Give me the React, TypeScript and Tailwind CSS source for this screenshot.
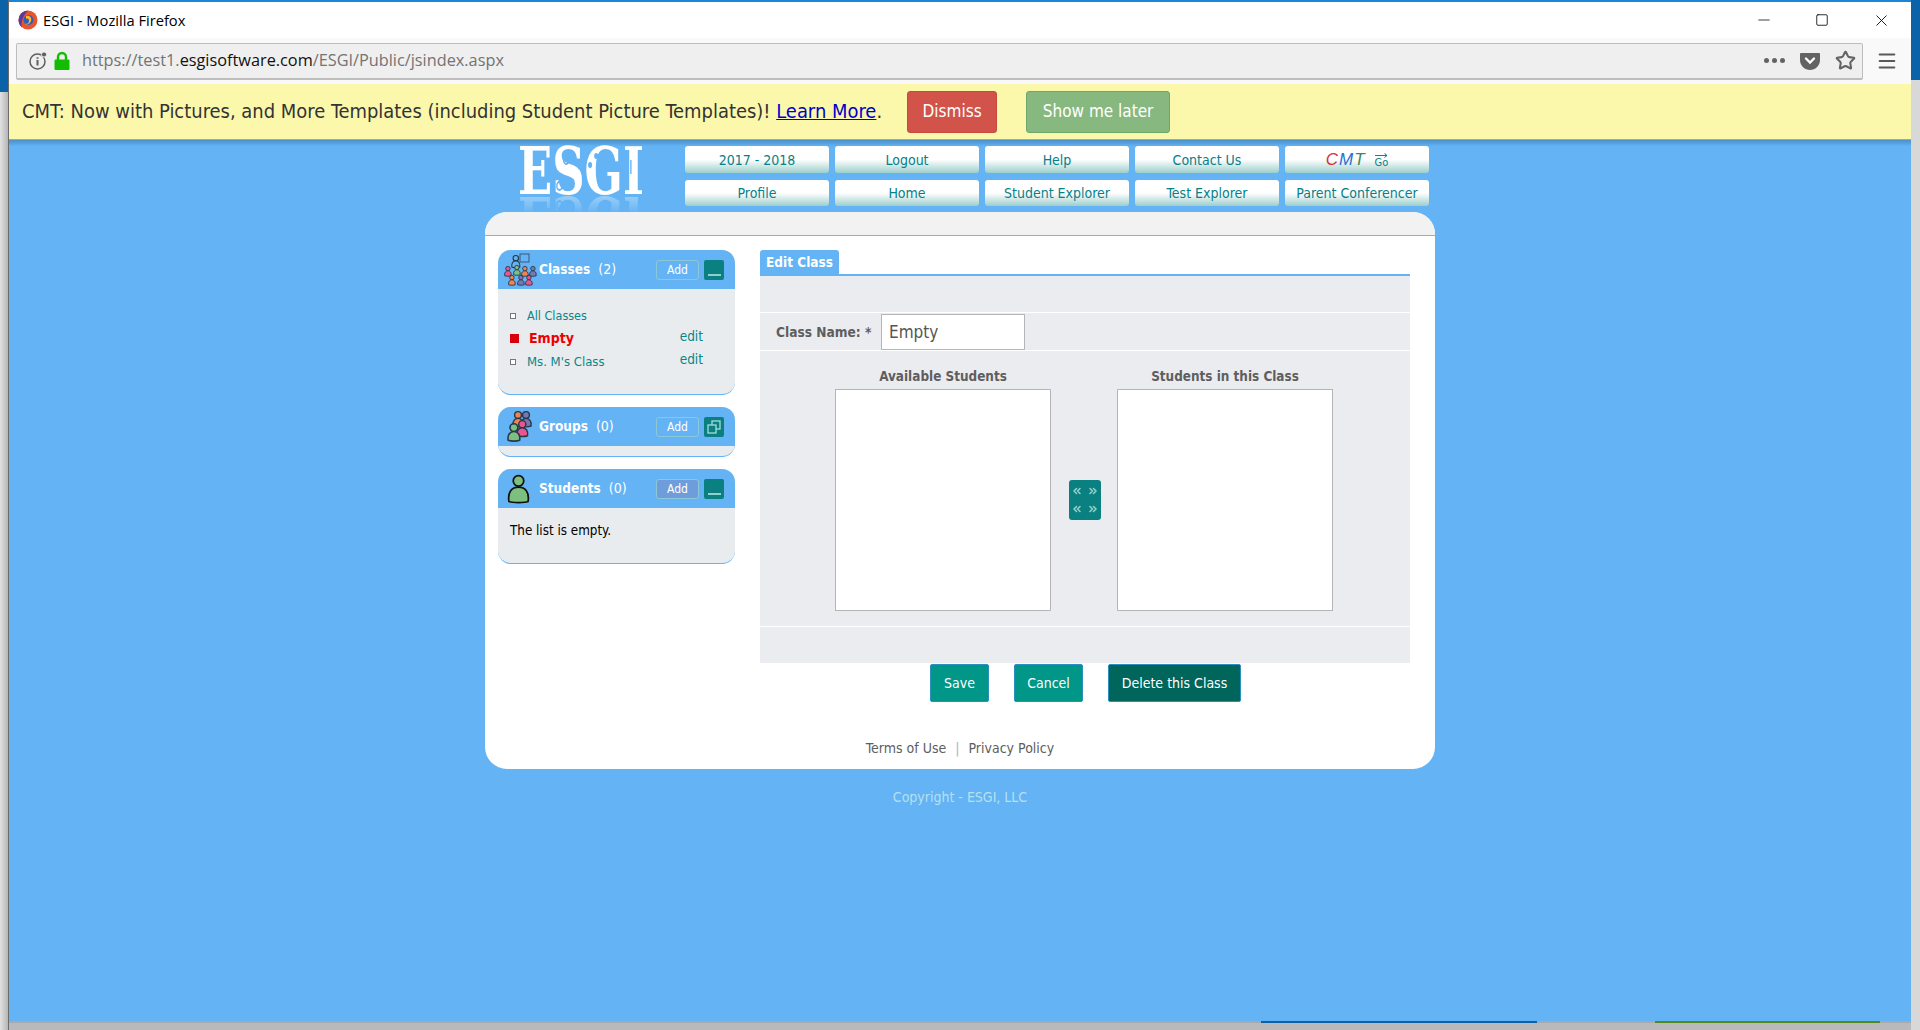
import { ChevronsLeft, ChevronsRight, Minus, Square, Star, X, Menu } from 'lucide-react'

const tahoma = "font-['DejaVu_Sans_Condensed','DejaVu_Sans',sans-serif]"

const topNav = ['2017 - 2018', 'Logout', 'Help', 'Contact Us', 'CMT']
const bottomNav = ['Profile', 'Home', 'Student Explorer', 'Test Explorer', 'Parent Conferencer']

function NavButton({ label, tall }: { label: string; tall?: boolean }) {
  return (
    <button
      className={`flex items-center justify-center rounded-[3px] bg-gradient-to-b from-white from-50% to-[#9ccfcc] pt-[1px] text-[14px] text-[#06808a] ${tall ? 'h-[27px]' : 'h-[26px]'}`}
    >
      {label === 'CMT' ? (
        <span className="flex items-center gap-[9px]">
          <span className="font-['Liberation_Sans',sans-serif] text-[17px] italic tracking-[1px]">
            <span className="text-[#d8303a]">C</span>
            <span className="text-[#2b6fd0]">M</span>
            <span className="text-[#3f8a55]">T</span>
          </span>
          <span className="flex flex-col items-center text-[11px] leading-[10px]">
            <svg width="13" height="5" viewBox="0 0 13 5" fill="none" stroke="#06808a">
              <path d="M0 2.500h12M9.500 .5l2.500 2-2.500 2" />
            </svg>
            Go
          </span>
        </span>
      ) : (
        label
      )}
    </button>
  )
}

function Person({ x, y, s, fill }: { x: number; y: number; s: number; fill: string }) {
  return (
    <g transform={`translate(${x} ${y}) scale(${s})`} fill={fill} stroke="#27384a" strokeWidth={1.4}>
      <circle cx="6" cy="4" r="3.4" />
      <path d="M1 15c-.8-5 1.800-7.600 5-7.600s5.800 2.600 5 7.600c-2.500 1-7.500 1-10 0z" />
    </g>
  )
}

function ClassesIcon() {
  return (
    <svg width="34" height="34" viewBox="0 0 34 34" className="-ml-[1px]">
      <rect x="16" y="1" width="9" height="8" fill="none" stroke="#3a5a7a" />
      <Person x={7} y={2} s={0.8} fill="#63b3f5" />
      <Person x={0} y={13} s={0.65} fill="#e9558f" />
      <Person x={9} y={12} s={0.65} fill="#7dbf7e" />
      <Person x={17} y={13} s={0.65} fill="#f0834f" />
      <Person x={25} y={13} s={0.65} fill="#7677b5" />
      <Person x={4} y={22} s={0.65} fill="#f0834f" />
      <Person x={13} y={22} s={0.65} fill="#7677b5" />
      <Person x={21} y={22} s={0.65} fill="#e9558f" />
    </svg>
  )
}

function GroupsIcon() {
  return (
    <svg width="28" height="34" viewBox="0 0 28 34" className="-ml-[3px]">
      <Person x={6} y={1} s={1} fill="#f0834f" />
      <Person x={14} y={1} s={1} fill="#7677b5" />
      <Person x={10} y={10} s={1.05} fill="#e9558f" />
      <Person x={1} y={13} s={1.15} fill="#7dbf7e" />
    </svg>
  )
}

function StudentIcon() {
  return (
    <svg width="23" height="32" viewBox="0 0 24 32" className="-ml-[5px]">
      <circle cx="12" cy="7.500" r="5.500" fill="#7dbf7e" stroke="#111" strokeWidth="1.800" />
      <path d="M2 29c-1.500-10 3-15 10-15s11.500 5 10 15c-4 1.500-16 1.500-20 0z" fill="#7dbf7e" stroke="#111" strokeWidth="1.800" />
    </svg>
  )
}

function PanelHeader({
  icon,
  title,
  count,
  toggle,
  addActive,
}: {
  icon: React.ReactNode
  title: string
  count: number
  toggle: 'minus' | 'restore'
  addActive?: boolean
}) {
  return (
    <div className="flex h-[39px] items-center rounded-t-[13px] bg-[#63b3f5] pl-[5px] pr-[11px]">
      <div className="flex w-[36px] justify-center">{icon}</div>
      <span className="text-[13.500px] font-bold text-white">{title}</span>
      <span className="ml-2 text-[14px] text-white">({count})</span>
      <button
        className={`ml-auto flex h-[20px] w-[43px] items-center justify-center rounded-[3px] border border-[#8cc8d8] text-[12px] text-white ${addActive ? 'bg-[#6f9ddb]' : ''}`}
      >
        Add
      </button>
      <div className="ml-[5px] flex size-[20px] items-center justify-center rounded-[2px] bg-[#0b8080]">
        {toggle === 'minus' ? (
          <span className="mt-[11px] h-[2px] w-[13px] bg-[#8fcfd0]" />
        ) : (
          <svg width="16" height="16" viewBox="0 0 16 16" fill="none" stroke="#a5dcdc" strokeWidth="1.300">
            <rect x="6" y="2" width="8" height="8" />
            <rect x="2" y="6" width="8" height="8" fill="#0b8080" />
          </svg>
        )}
      </div>
    </div>
  )
}

function ClassRow({ name, active, edit, small }: { name: string; active?: boolean; edit?: boolean; small?: boolean }) {
  return (
    <div className="flex h-[23px] items-center pl-[12px] pr-[32px] text-[13px]">
      <span className="flex w-[17px] items-center">
        {active ? (
          <span className="size-[9px] bg-[#d8000c]" />
        ) : (
          <span className="size-[6px] border border-[#777] bg-white" />
        )}
      </span>
      <span className={active ? 'pl-[2px] text-[14px] font-bold text-[#f00000]' : `text-[#0a8588] ${small ? 'pt-[2px] text-[12.500px]' : ''}`}>
        {name}
      </span>
      {edit && <span className="ml-auto -translate-y-[2px] text-[13.500px] text-[#0a8588]">edit</span>}
    </div>
  )
}

function StudentList({ title }: { title: string }) {
  return (
    <div className="flex w-[216px] flex-col">
      <div className="h-[26px] pt-[1px] text-center text-[13.400px] font-bold leading-[26px] text-[#5e5e5e]">{title}</div>
      <div className="h-[222px] border border-[#b5b5b8] bg-white" />
    </div>
  )
}

function EsgiLogo() {
  return (
    <div className="ml-[33px] mt-[1px] h-[48px] w-[120px] [-webkit-box-reflect:below_1px_linear-gradient(transparent_62%,rgba(255,255,255,0.35))]">
      <div className="relative h-[48px] w-[177px] origin-top-left scale-x-[0.68] font-['DejaVu_Serif',serif] text-[66px] font-bold leading-[48px] text-white">
        ESGI
        <span className="absolute left-[103px] top-[15px] size-[6px] rounded-full bg-[#63b3f5]" />
        <span className="absolute left-[112px] top-[6px] size-[6px] rounded-full bg-[#63b3f5]" />
        <span className="absolute left-[123px] top-[4px] size-[6px] rounded-full bg-[#63b3f5]" />
        <span className="absolute left-[66px] top-[8px] size-[10px] rounded-full border-2 border-[#63b3f5]" />
        <span className="absolute left-[56px] top-[34px] size-[10px] rounded-full border-2 border-[#63b3f5]" />
        <span className="absolute left-[165px] top-[13px] h-[14px] w-[2px] bg-[#63b3f5]" />
      </div>
    </div>
  )
}

export default function App() {
  return (
    <div className={`flex h-[1030px] w-[1920px] overflow-hidden bg-gradient-to-b from-[#dcdcdc] to-[#b9b9bb] ${tahoma}`}>
      {/* bordes de la ventana de atras */}
      <div className="flex h-full w-[9px] shrink-0 flex-col border-r border-[#6b6b6b]">
        <div className="h-[92px] bg-[#0a63a8]" />
        <div className="flex-1 bg-gradient-to-r from-[#e2e2e2] to-[#b5b5b5]" />
      </div>

      <div className="flex h-[1023px] min-w-0 flex-1 flex-col">
        {/* Titulo */}
        <div className="flex h-[38px] shrink-0 items-center border-t-2 border-[#1a86d8] bg-white pl-[9px] font-['Open_Sans',sans-serif] text-[14.700px] text-black">
          <svg width="20" height="20" viewBox="0 0 20 20">
            <circle cx="10" cy="10" r="9.500" fill="#e8552d" />
            <path d="M10 .5a9.500 9.500 0 0 0-9.500 9.500c0 3 1.500 6 3.500 7.500C2.500 12 5 6 10 .5z" fill="#5b3aa0" />
            <circle cx="10.500" cy="10" r="5" fill="#2d5fb8" />
            <path d="M8 6c4-1 6 2 5 5s-4 4-6 3c3 0 4-1 4-3S10 8 8 9z" fill="#ffb52e" />
          </svg>
          <span className="ml-[5px]">ESGI - Mozilla Firefox</span>
          <div className="ml-auto flex items-center">
            <Minus size={18} strokeWidth={1} className="mr-[42px] text-black" />
            <Square size={14} strokeWidth={1.400} className="mr-[43px] text-black" />
            <X size={19} strokeWidth={1.100} className="mr-[20px] text-black" />
          </div>
        </div>

        {/* Barra de direccion */}
        <div className="flex h-[46px] shrink-0 items-center bg-[#f9f9fa] pl-[7px] pr-[13px]">
          <div className="flex h-[37px] w-[1847px] items-center rounded-[2px] border border-b-2 border-[#bdbdbd] bg-[#efefef] pl-[11px] font-['Open_Sans',sans-serif] text-[16.300px]">
            <svg width="20" height="20" viewBox="0 0 20 20" fill="none" stroke="#5f5f60" strokeWidth="1.500">
              <circle cx="9.500" cy="10.500" r="7.500" />
              <path d="M9.500 9v5.500M9.500 6.300v1.400" strokeWidth="2" />
              <circle cx="16" cy="3.500" r="2.600" fill="#5f5f60" stroke="#efefef" strokeWidth="1" />
            </svg>
            <svg width="18" height="20" viewBox="0 0 18 20" className="ml-[5px]">
              <path d="M5 9V6a4 4 0 0 1 8 0v3" fill="none" stroke="#12bc00" strokeWidth="2.400" />
              <rect x="1.500" y="8.500" width="15" height="10.500" rx="1.200" fill="#12bc00" />
            </svg>
            <span className="ml-[11px] text-[#737373]">
              https://test1.<span className="text-[#111]">esgisoftware.com</span>/ESGI/Public/jsindex.aspx
            </span>
            <div className="ml-auto flex items-center pr-[6px]">
              <span className="mr-[15px] flex gap-[3px]">
                <span className="size-[5px] rounded-full bg-[#636363]" />
                <span className="size-[5px] rounded-full bg-[#636363]" />
                <span className="size-[5px] rounded-full bg-[#636363]" />
              </span>
              <svg width="20" height="20" viewBox="0 0 20 20" className="mr-[15px]">
                <path d="M1 2h18a1 1 0 0 1 1 1v6c0 6-5 10-10 10S0 15 0 9V3a1 1 0 0 1 1-1z" fill="#636363" />
                <path d="M6 7.500l4 4 4-4" fill="none" stroke="#fff" strokeWidth="2.400" strokeLinecap="round" />
              </svg>
              <Star size={21} strokeWidth={2.400} className="text-[#636363]" />
            </div>
          </div>
          <Menu size={22} strokeWidth={2.200} className="ml-auto text-[#595959]" />
        </div>

        {/* Aviso CMT */}
        <div className="flex h-[56px] shrink-0 items-center border-b border-[#7fb0d0] bg-[#fbf8ac] pl-[13px] text-[19.950px] text-[#333]">
          <span>
            CMT: Now with Pictures, and More Templates (including Student Picture Templates)!{' '}
            <a className="text-[#0000cc] underline">Learn More</a>.
          </span>
          <button className="ml-[25px] h-[42px] w-[90px] rounded-[3px] border border-[#c9483f] bg-[#d1534a] text-[17px] text-white">
            Dismiss
          </button>
          <button className="ml-[29px] h-[42px] w-[144px] rounded-[3px] border border-[#6ea76e] bg-[#87b87f] text-[17px] text-white">
            Show me later
          </button>
        </div>

        {/* Contenido */}
        <div className="min-h-0 flex-1 bg-gradient-to-b from-[#4c8fc8] from-0% via-[#63b3f5] via-[0.7%] to-[#63b3f5]">
          <div className="mx-auto w-[950px]">
            {/* Cabecera */}
            <div className="flex h-[72px] pt-[6px]">
              <EsgiLogo />
              <div className="ml-[47px] grid w-[744px] grid-cols-5 gap-x-[6px] gap-y-[7px] self-start">
                {topNav.map((label) => (
                  <NavButton key={label} label={label} tall />
                ))}
                {bottomNav.map((label) => (
                  <NavButton key={label} label={label} />
                ))}
              </div>
            </div>

            {/* Tarjeta */}
            <div className="h-[557px] overflow-hidden rounded-[22px] bg-white">
              <div className="h-[24px] border-b border-[#aaaaaa] bg-[#f2f2f2]" />
              <div className="flex px-[13px] pt-[14px]">
                {/* Paneles */}
                <div className="flex w-[237px] flex-col gap-[12px]">
                  <div className="rounded-[13px] border-b border-[#63b3f5] bg-[#e9ecee]">
                    <PanelHeader icon={<ClassesIcon />} title="Classes" count={2} toggle="minus" />
                    <div className="h-[105px] pt-[15px]">
                      <ClassRow name="All Classes" small />
                      <ClassRow name="Empty" active edit />
                      <ClassRow name="Ms. M's Class" edit />
                    </div>
                  </div>
                  <div className="rounded-[13px] border-b border-[#63b3f5] bg-[#e9ecee]">
                    <PanelHeader icon={<GroupsIcon />} title="Groups" count={0} toggle="restore" />
                    <div className="h-[10px]" />
                  </div>
                  <div className="rounded-[13px] border-b border-[#63b3f5] bg-[#e9ecee]">
                    <PanelHeader icon={<StudentIcon />} title="Students" count={0} toggle="minus" addActive />
                    <div className="h-[55px] pl-[12px] pt-[13px] text-[13.300px] text-black">The list is empty.</div>
                  </div>
                </div>

                {/* Formulario */}
                <div className="ml-[25px] w-[650px]">
                  <div className="flex h-[26px] border-b-2 border-[#63b3f5]">
                    <div className="flex w-[79px] items-center justify-center rounded-t-[3px] bg-[#63b3f5] text-[13.500px] font-bold text-white">
                      Edit Class
                    </div>
                  </div>
                  <div className="bg-[#ebecf0]">
                    <div className="h-[37px] border-b border-white" />
                    <div className="flex h-[38px] items-center border-b border-white pl-[16px]">
                      <label className="w-[105px] pt-[2px] text-[13.600px] font-bold text-[#5e5e5e]">Class Name: *</label>
                      <div className="flex h-[36px] w-[144px] items-center border border-[#b5b5b8] bg-white pl-[7px] pt-[2px] text-[17px] text-[#555]">
                        Empty
                      </div>
                    </div>
                    <div className="flex h-[276px] items-start border-b border-white pl-[75px] pt-[12px]">
                      <StudentList title="Available Students" />
                      <div className="ml-[18px] mt-[117px] grid h-[40px] w-[32px] grid-cols-2 rounded-[3px] bg-[#0b8080] py-[2px] text-[#8fd0cc]">
                        <ChevronsLeft size={12} strokeWidth={3.200} className="m-auto" />
                        <ChevronsRight size={12} strokeWidth={3.200} className="m-auto" />
                        <ChevronsLeft size={12} strokeWidth={3.200} className="m-auto" />
                        <ChevronsRight size={12} strokeWidth={3.200} className="m-auto" />
                      </div>
                      <div className="ml-[16px]">
                        <StudentList title="Students in this Class" />
                      </div>
                    </div>
                    <div className="h-[36px]" />
                  </div>
                  <div className="mt-[1px] flex gap-[25px] pl-[170px] text-[14px] text-white">
                    <button className="h-[38px] w-[59px] rounded-[2px] border border-[#2a90c0] bg-[#009688]">Save</button>
                    <button className="h-[38px] w-[69px] rounded-[2px] border border-[#2a90c0] bg-[#009688]">Cancel</button>
                    <button className="h-[38px] w-[133px] rounded-[2px] border border-[#2a90c0] bg-[#00665c]">Delete this Class</button>
                  </div>
                </div>
              </div>

              <div className="mt-[36px] flex justify-center text-[14px] text-[#5e5e5e]">
                <span>Terms of Use</span>
                <span className="mx-[9px] text-[#9fb4c4]">|</span>
                <span>Privacy Policy</span>
              </div>
            </div>

            <div className="mt-[18px] text-center text-[14px] text-[#b5e0f0]">Copyright - ESGI, LLC</div>
          </div>
        </div>

        {/* borde inferior, con lo que asoma de la ventana de atras */}
        <div className="flex h-[2px] shrink-0 bg-[#a9a9ab]">
          <div className="ml-[1252px] w-[276px] bg-[#0a63a8]" />
          <div className="ml-[118px] w-[225px] bg-[#4f8a1e]" />
        </div>
      </div>

      <div className="flex h-full w-[9px] shrink-0 flex-col">
        <div className="h-[80px] bg-[#0a63a8]" />
        <div className="flex-1 bg-[#d8d8d8]" />
      </div>
    </div>
  )
}
